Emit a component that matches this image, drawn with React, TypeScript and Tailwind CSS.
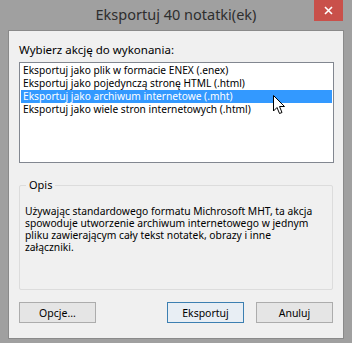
const items = [
  "Eksportuj jako plik w formacie ENEX (.enex)",
  "Eksportuj jako pojedynczą stronę HTML (.html)",
  "Eksportuj jako archiwum internetowe (.mht)",
  "Eksportuj jako wiele stron internetowych (.html)",
];

const opis = [
  "Używając standardowego formatu Michrosoft MHT, ta akcja",
  "spowoduje utworzenie archiwum internetowego w jednym",
  "pliku zawierającym cały tekst notatek, obrazy i inne",
  "załączniki.",
];

function Cursor() {
  return (
    <svg width="13" height="20" viewBox="0 0 13 20" className="absolute left-[252px] top-[5px]">
      <path
        d="M0.5 0.5 L0.5 16 L4 12.5 L6.5 18.5 L9 17.5 L6.5 11.5 L11.5 11.5 Z"
        fill="#fff"
        stroke="#000"
        strokeWidth="1"
      />
    </svg>
  );
}

export default function App() {
  return (
    <div
      className="flex h-[343px] w-[352px] flex-col bg-[#a0a0a0] text-[10.5px] text-black"
      style={{ fontFamily: '"Noto Sans", "Open Sans", sans-serif' }}
    >
      {/* title bar */}
      <div className="relative flex h-[30px] items-center justify-center">
        <span className="text-[14.5px] text-[#2e2e2e]">Eksportuj 40 notatki(ek)</span>
        <div className="absolute right-[9px] top-0 flex h-[21px] w-[29px] items-center justify-center bg-[#c9504a]">
          <svg width="9" height="9" viewBox="0 0 9 9">
            <path d="M1 1 L8 8 M8 1 L1 8" stroke="#fff" strokeWidth="1.6" />
          </svg>
        </div>
      </div>

      {/* client area */}
      <div className="mx-2 flex h-[309px] flex-col border border-[#8a8a8a] bg-[#f0f0f0] px-[10px]">
        <div className="mt-[11px] h-[20px] text-[11.5px] leading-[16px]">Wybierz akcję do wykonania:</div>

        <div className="h-[101px] w-[315px] border border-[#828790] bg-white p-px text-[10.2px]">
          <div className="relative">
            {items.map((item, i) => (
              <div
                key={i}
                className={
                  i === 2
                    ? "h-[13px] overflow-hidden whitespace-nowrap bg-[#3399ff] pl-[2px] leading-[13px] text-white"
                    : "h-[13px] overflow-hidden whitespace-nowrap pl-[2px] leading-[13px]"
                }
              >
                {item}
              </div>
            ))}
            <div className="absolute left-0 top-[26px]">
              <Cursor />
            </div>
          </div>
        </div>

        {/* group box */}
        <div className="relative mt-[22px] h-[105px] w-[314px] rounded-[2px] border border-[#dcdcdc]">
          <span className="absolute -top-[9px] left-[6px] bg-[#f0f0f0] px-[3px] text-[11px] leading-[16px]">Opis</span>
          <div className="mt-[19px] px-[5px] text-[10.3px] leading-[12px]">
            {opis.map((line, i) => (
              <div key={i} className="h-[12px] whitespace-nowrap">
                {line}
              </div>
            ))}
          </div>
        </div>

        <div className="mt-[12px] flex">
          <button className="h-[21px] w-[77px] border border-[#acacac] bg-[#e5e5e5] leading-[18px]">Opcje...</button>
          <button className="ml-auto h-[21px] w-[77px] border border-[#3c7fb1] bg-[#e8eef4] leading-[18px]">Eksportuj</button>
          <button className="ml-[12px] h-[21px] w-[77px] border border-[#acacac] bg-[#e5e5e5] leading-[18px]">Anuluj</button>
        </div>
      </div>
    </div>
  );
}
